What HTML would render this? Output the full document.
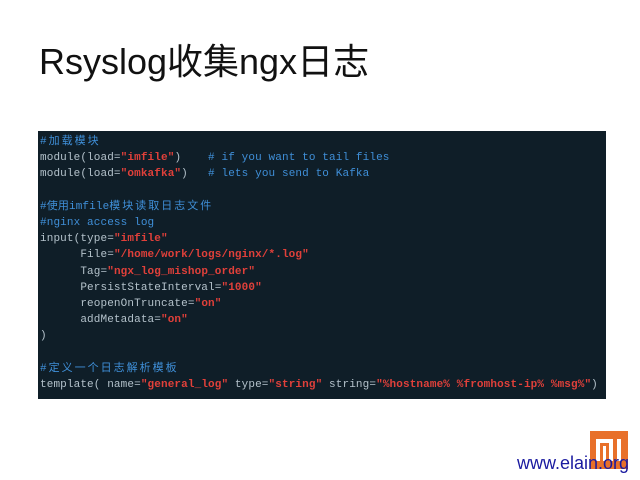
<!DOCTYPE html>
<html><head><meta charset="utf-8"><style>
body{margin:0;width:640px;height:480px;background:#fff;position:relative;overflow:hidden}
.t{position:absolute;left:39px;top:40px;font:36px "Liberation Sans","Noto Sans CJK SC",sans-serif;color:#111;line-height:44px;white-space:nowrap}
.code{position:absolute;left:38px;top:131px;width:568px;height:268px;background:#0f1e28;}
pre{margin:0;position:absolute;left:2px;top:3px;font:11px/16.2px "Liberation Mono","Noto Sans CJK SC",monospace;letter-spacing:0.12px;color:#b4c2cb}
.c{color:#3f8fd8}.s{color:#e0403a;font-weight:bold}
.z{letter-spacing:2px}.n{letter-spacing:0.12px}
.logo{position:absolute;left:590px;top:431px;width:38px;height:38px;background:#e8702a}
.logo i{position:absolute;background:#fff}
.w{position:absolute;left:517px;top:452px;font:18px "Liberation Sans",sans-serif;color:#1a1aa0;line-height:22px}
</style></head><body>
<div class="t">Rsyslog收集ngx日志</div>
<div class="code"><pre><span class="c z">#加载模块</span>
module(load=<span class="s">"imfile"</span>)    <span class="c"># if you want to tail files</span>
module(load=<span class="s">"omkafka"</span>)   <span class="c"># lets you send to Kafka</span>

<span class="c">#使用<span class="n">imfile</span><span class="z">模块读取日志文件</span></span>
<span class="c">#nginx access log</span>
input(type=<span class="s">"imfile"</span>
      File=<span class="s">"/home/work/logs/nginx/*.log"</span>
      Tag=<span class="s">"ngx_log_mishop_order"</span>
      PersistStateInterval=<span class="s">"1000"</span>
      reopenOnTruncate=<span class="s">"on"</span>
      addMetadata=<span class="s">"on"</span>
)

<span class="c z">#定义一个日志解析模板</span>
template( name=<span class="s">"general_log"</span> type=<span class="s">"string"</span> string=<span class="s">"%hostname% %fromhost-ip% %msg%"</span>)</pre></div>
<div class="logo"><i style="left:6px;top:8px;width:17px;height:4px"></i><i style="left:6px;top:8px;width:4px;height:22px"></i><i style="left:19px;top:8px;width:4px;height:22px"></i><i style="left:13px;top:15px;width:3px;height:15px"></i><i style="left:27px;top:8px;width:4px;height:22px"></i></div>
<div class="w">www.elain.org</div>
</body></html>
